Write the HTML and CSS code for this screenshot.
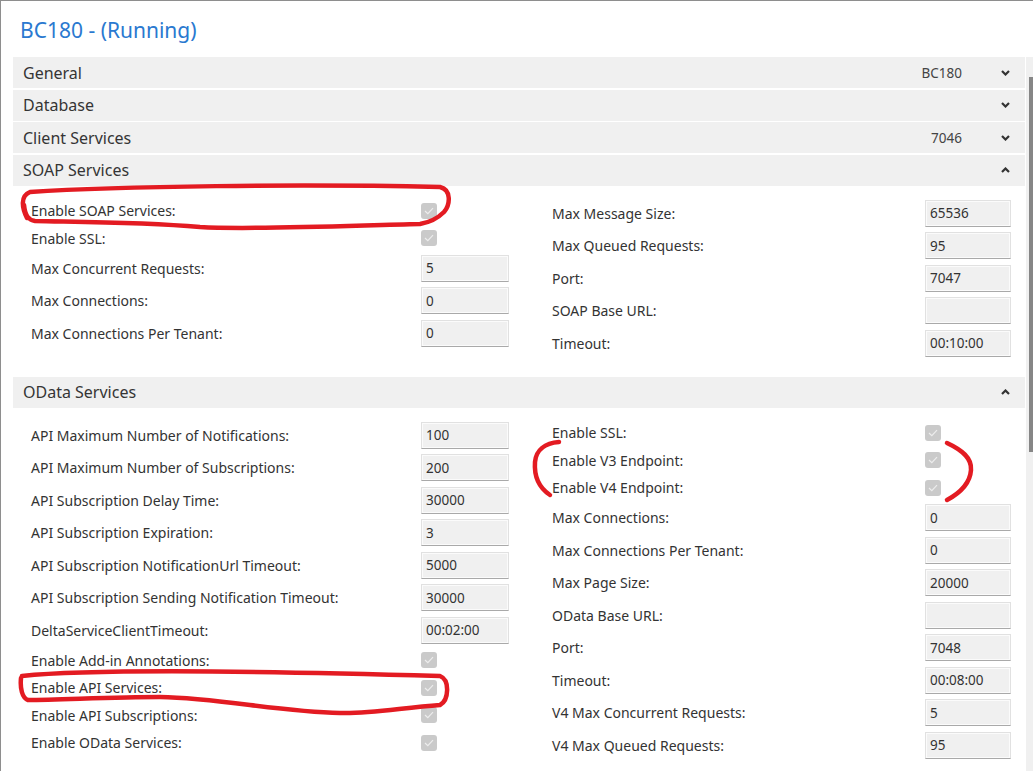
FILE: index.html
```html
<!DOCTYPE html>
<html>
<head>
<meta charset="utf-8">
<link rel="stylesheet" href="styles.css">
</head>
<body>
<div class="window">
  <div class="content">
    <div class="title">BC180 - (Running)</div>

    <div class="sec-head"><span class="sec-name">General</span><span class="sec-value">BC180</span><svg class="chev" width="9" height="6" viewBox="0 0 9 6"><path d="M1 1l3.5 3.5L8 1" stroke="#333" stroke-width="2.2" fill="none"/></svg></div>
    <div class="sec-head"><span class="sec-name">Database</span><span class="sec-value"></span><svg class="chev" width="9" height="6" viewBox="0 0 9 6"><path d="M1 1l3.5 3.5L8 1" stroke="#333" stroke-width="2.2" fill="none"/></svg></div>
    <div class="sec-head"><span class="sec-name">Client Services</span><span class="sec-value">7046</span><svg class="chev" width="9" height="6" viewBox="0 0 9 6"><path d="M1 1l3.5 3.5L8 1" stroke="#333" stroke-width="2.2" fill="none"/></svg></div>
    <div class="sec-head"><span class="sec-name">SOAP Services</span><span class="sec-value"></span><svg class="chev" width="9" height="6" viewBox="0 0 9 6"><path d="M1 5l3.5-3.5L8 5" stroke="#333" stroke-width="2.2" fill="none"/></svg></div>

    <div class="sec-body">
      <div class="col col-left">
        <div class="row cb-row"><span class="lbl">Enable SOAP Services:</span><span class="ctl"><span class="cb"><svg width="10" height="8" viewBox="0 0 10 8"><path d="M1 4l2.8 2.6L9 1.2" stroke="#ededed" stroke-width="1.2" fill="none"/></svg></span></span></div>
        <div class="row cb-row"><span class="lbl">Enable SSL:</span><span class="ctl"><span class="cb"><svg width="10" height="8" viewBox="0 0 10 8"><path d="M1 4l2.8 2.6L9 1.2" stroke="#ededed" stroke-width="1.2" fill="none"/></svg></span></span></div>
        <div class="row tb-row"><span class="lbl">Max Concurrent Requests:</span><span class="ctl"><span class="tb">5</span></span></div>
        <div class="row tb-row"><span class="lbl">Max Connections:</span><span class="ctl"><span class="tb">0</span></span></div>
        <div class="row tb-row"><span class="lbl">Max Connections Per Tenant:</span><span class="ctl"><span class="tb">0</span></span></div>
      </div>
      <div class="col col-right">
        <div class="row tb-row"><span class="lbl">Max Message Size:</span><span class="ctl"><span class="tb">65536</span></span></div>
        <div class="row tb-row"><span class="lbl">Max Queued Requests:</span><span class="ctl"><span class="tb">95</span></span></div>
        <div class="row tb-row"><span class="lbl">Port:</span><span class="ctl"><span class="tb">7047</span></span></div>
        <div class="row tb-row"><span class="lbl">SOAP Base URL:</span><span class="ctl"><span class="tb"></span></span></div>
        <div class="row tb-row"><span class="lbl">Timeout:</span><span class="ctl"><span class="tb">00:10:00</span></span></div>
      </div>
    </div>

    <div class="sec-head"><span class="sec-name">OData Services</span><span class="sec-value"></span><svg class="chev" width="9" height="6" viewBox="0 0 9 6"><path d="M1 5l3.5-3.5L8 5" stroke="#333" stroke-width="2.2" fill="none"/></svg></div>

    <div class="sec-body">
      <div class="col col-left">
        <div class="row tb-row"><span class="lbl">API Maximum Number of Notifications:</span><span class="ctl"><span class="tb">100</span></span></div>
        <div class="row tb-row"><span class="lbl">API Maximum Number of Subscriptions:</span><span class="ctl"><span class="tb">200</span></span></div>
        <div class="row tb-row"><span class="lbl">API Subscription Delay Time:</span><span class="ctl"><span class="tb">30000</span></span></div>
        <div class="row tb-row"><span class="lbl">API Subscription Expiration:</span><span class="ctl"><span class="tb">3</span></span></div>
        <div class="row tb-row"><span class="lbl">API Subscription NotificationUrl Timeout:</span><span class="ctl"><span class="tb">5000</span></span></div>
        <div class="row tb-row"><span class="lbl">API Subscription Sending Notification Timeout:</span><span class="ctl"><span class="tb">30000</span></span></div>
        <div class="row tb-row"><span class="lbl">DeltaServiceClientTimeout:</span><span class="ctl"><span class="tb">00:02:00</span></span></div>
        <div class="row cb-row"><span class="lbl">Enable Add-in Annotations:</span><span class="ctl"><span class="cb"><svg width="10" height="8" viewBox="0 0 10 8"><path d="M1 4l2.8 2.6L9 1.2" stroke="#ededed" stroke-width="1.2" fill="none"/></svg></span></span></div>
        <div class="row cb-row"><span class="lbl">Enable API Services:</span><span class="ctl"><span class="cb"><svg width="10" height="8" viewBox="0 0 10 8"><path d="M1 4l2.8 2.6L9 1.2" stroke="#ededed" stroke-width="1.2" fill="none"/></svg></span></span></div>
        <div class="row cb-row"><span class="lbl">Enable API Subscriptions:</span><span class="ctl"><span class="cb"><svg width="10" height="8" viewBox="0 0 10 8"><path d="M1 4l2.8 2.6L9 1.2" stroke="#ededed" stroke-width="1.2" fill="none"/></svg></span></span></div>
        <div class="row cb-row"><span class="lbl">Enable OData Services:</span><span class="ctl"><span class="cb"><svg width="10" height="8" viewBox="0 0 10 8"><path d="M1 4l2.8 2.6L9 1.2" stroke="#ededed" stroke-width="1.2" fill="none"/></svg></span></span></div>
      </div>
      <div class="col col-right">
        <div class="row cb-row"><span class="lbl">Enable SSL:</span><span class="ctl"><span class="cb"><svg width="10" height="8" viewBox="0 0 10 8"><path d="M1 4l2.8 2.6L9 1.2" stroke="#ededed" stroke-width="1.2" fill="none"/></svg></span></span></div>
        <div class="row cb-row"><span class="lbl">Enable V3 Endpoint:</span><span class="ctl"><span class="cb"><svg width="10" height="8" viewBox="0 0 10 8"><path d="M1 4l2.8 2.6L9 1.2" stroke="#ededed" stroke-width="1.2" fill="none"/></svg></span></span></div>
        <div class="row cb-row"><span class="lbl">Enable V4 Endpoint:</span><span class="ctl"><span class="cb"><svg width="10" height="8" viewBox="0 0 10 8"><path d="M1 4l2.8 2.6L9 1.2" stroke="#ededed" stroke-width="1.2" fill="none"/></svg></span></span></div>
        <div class="row tb-row"><span class="lbl">Max Connections:</span><span class="ctl"><span class="tb">0</span></span></div>
        <div class="row tb-row"><span class="lbl">Max Connections Per Tenant:</span><span class="ctl"><span class="tb">0</span></span></div>
        <div class="row tb-row"><span class="lbl">Max Page Size:</span><span class="ctl"><span class="tb">20000</span></span></div>
        <div class="row tb-row"><span class="lbl">OData Base URL:</span><span class="ctl"><span class="tb"></span></span></div>
        <div class="row tb-row"><span class="lbl">Port:</span><span class="ctl"><span class="tb">7048</span></span></div>
        <div class="row tb-row"><span class="lbl">Timeout:</span><span class="ctl"><span class="tb">00:08:00</span></span></div>
        <div class="row tb-row"><span class="lbl">V4 Max Concurrent Requests:</span><span class="ctl"><span class="tb">5</span></span></div>
        <div class="row tb-row"><span class="lbl">V4 Max Queued Requests:</span><span class="ctl"><span class="tb">95</span></span></div>
      </div>
    </div>
  </div>
  <div class="scrollbar"><div class="thumb"></div></div>

  <svg class="marks" width="1033" height="771" viewBox="0 0 1033 771">
    <path d="M27 218 C22 208 20 196 30 192 C120 186 300 184 440 187 C452 190 450 205 444 212 C438 218 432 222 420 224 C340 226 250 230 200 227 C140 222 80 222 35 221 C28 220 25 215 24 205"/>
    <path d="M559 442 C545 443 536 450 535 462 C534 476 538 487 550 495"/>
    <path d="M947 443 C962 450 972 458 971 470 C970 484 960 493 947 500"/>
    <path d="M22 676 C100 668 300 672 440 676 C450 680 449 700 440 705 C400 708 370 714 340 713 C280 712 220 698 160 697 C110 697 60 700 28 700 C22 698 20 688 21 678"/>
  </svg>
</div>
</body>
</html>
```

FILE: styles.css
```css
* { box-sizing: border-box; }
html, body { margin: 0; padding: 0; background: #fff; }
body { font-family: "Noto Sans", "Open Sans", sans-serif; color: #333; }

.window {
  position: relative;
  width: 1033px;
  height: 771px;
  overflow: hidden;
  display: flex;
  border-top: 1px solid #8e8e8e;
  border-left: 1px solid #8e8e8e;
}

.content {
  flex: 1;
  padding-left: 12px;
  margin-right: 1px;
}

.title {
  height: 56px;
  padding: 14px 0 0 7px;
  font-size: 21px;
  line-height: 30px;
  color: #2a79d0;
}

.sec-head {
  height: 31px;
  margin-bottom: 1.5px;
  background: #f0f0f0;
  display: flex;
  align-items: center;
  padding: 0 15px 0 10px;
  font-size: 16px;
  color: #353535;
}
.sec-name { flex: 1; }
.sec-value { font-size: 13.5px; color: #444; margin-right: 39px; }
.chev { display: block; }

.sec-body {
  display: grid;
  grid-template-columns: 478px 459px;
  column-gap: 43px;
  padding: 10px 14px 17px 18px;
}

.row {
  display: flex;
  align-items: center;
  font-size: 14px;
  color: #333;
}
.tb-row { height: 32.5px; }
.cb-row { height: 27.5px; }
.lbl { flex: 1; white-space: nowrap; }

.col-left .ctl { width: 88px; }
.col-right .ctl { width: 86px; }

.tb {
  display: flex;
  align-items: center;
  height: 27px;
  padding-left: 4px;
  background: #f0f0f0;
  border: 1px solid #e1e1e1;
  border-bottom-color: #a9a9a9;
  box-shadow: inset 0 0 0 1px #fbfbfb;
  font-size: 13.5px;
  color: #333;
}

.cb {
  display: flex;
  align-items: center;
  justify-content: center;
  width: 16px;
  height: 16px;
  border-radius: 3px;
  background: #cacaca;
}
.cb svg { display: block; }

.scrollbar {
  width: 7px;
  margin-top: 56px;
  background: #f0f0f0;
  padding-top: 20px;
  padding-left: 3px;
}
.thumb {
  height: 375px;
  background: #868686;
}

.marks {
  position: absolute;
  left: -1px;
  top: -1px;
  pointer-events: none;
}
.marks path {
  fill: none;
  stroke: #e31b22;
  stroke-width: 4.5;
  stroke-linecap: round;
  stroke-linejoin: round;
}
```
